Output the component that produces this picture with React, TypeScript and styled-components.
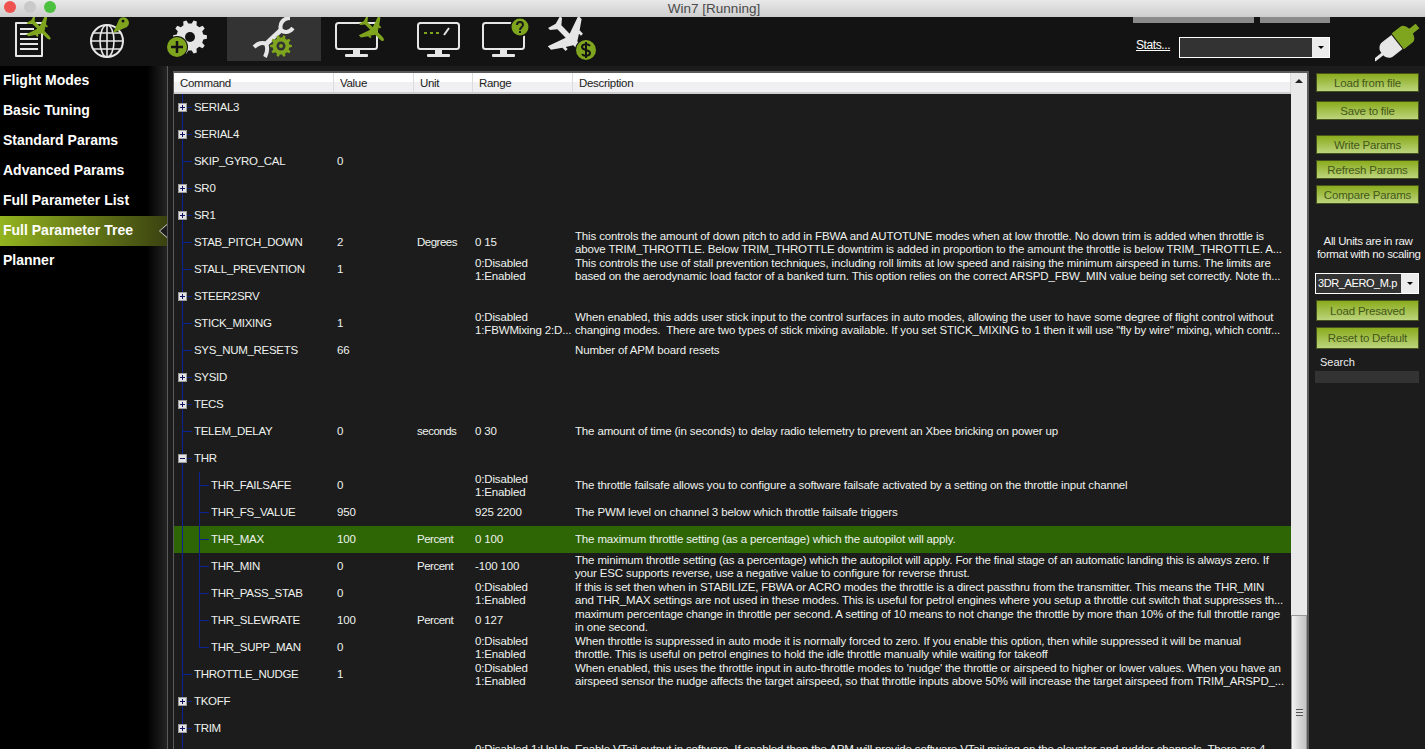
import styled, { createGlobalStyle } from 'styled-components';

const GlobalStyle = createGlobalStyle`
    html, body {
        margin: 0;
        padding: 0;
        background: #1c1c1c;
        overflow: hidden;
    }
`;

const Screen = styled.div`
    display: flex;
    flex-direction: column;
    width: 1425px;
    height: 749px;
    overflow: hidden;
    font-family: "Liberation Sans", Arial, sans-serif;
`;

const TitleBar = styled.div`
    position: relative;
    display: flex;
    align-items: center;
    justify-content: center;
    flex: 0 0 17px;
    padding-left: 3px;
    background: linear-gradient(#e9e9e9, #cdcdcd);
    color: #4a4a4a;
    font-size: 13.5px;
    z-index: 3;
`;

const Lights = styled.div`
    position: absolute;
    left: 4px;
    top: 1px;
    display: flex;
    gap: 8px;
`;

const Light = styled.span<{ $color: string }>`
    width: 12px;
    height: 12px;
    border-radius: 50%;
    background: ${(p) => p.$color};
`;

const Toolbar = styled.div`
    display: flex;
    align-items: flex-start;
    flex: 0 0 49px;
    background: #131313;
`;

const ToolButton = styled.div<{ $width: number; $active?: boolean }>`
    flex: 0 0 ${(p) => p.$width}px;
    height: ${(p) => (p.$active ? 44 : 49)}px;
    background: ${(p) => (p.$active ? '#333333' : 'transparent')};
    overflow: hidden;

    svg {
        display: block;
    }
`;

const ToolRight = styled.div`
    position: relative;
    display: flex;
    align-items: center;
    flex: 1;
    height: 49px;
    padding: 12px 0 0 526px;
    box-sizing: border-box;
`;

const TopTabs = styled.div`
    position: absolute;
    top: 0;
    left: 523px;
    display: flex;
    gap: 6px;
`;

const TopTab = styled.div<{ $width: number }>`
    width: ${(p) => p.$width}px;
    height: 6px;
    background: #8a8a8a;
`;

const StatsLink = styled.a`
    color: #fff;
    font-size: 12px;
    letter-spacing: -0.4px;
    text-decoration: underline;
    margin: -6px 9px 0 0;
    width: 34px;
`;

const Combo = styled.div<{ $width: number; $height: number; $top?: number }>`
    display: flex;
    align-items: stretch;
    box-sizing: border-box;
    flex-shrink: 0;
    width: ${(p) => p.$width}px;
    height: ${(p) => p.$height}px;
    margin-top: ${(p) => p.$top ?? 0}px;
    border: 1px solid #fff;
    background: #333;
    color: #fff;
    font-size: 11px;
    letter-spacing: -0.4px;
`;

const ComboText = styled.div`
    flex: 1;
    padding-left: 2px;
    line-height: 19px;
    white-space: nowrap;
    overflow: hidden;
`;

const ComboArrow = styled.div`
    display: flex;
    align-items: center;
    justify-content: center;
    flex: 0 0 17px;
    background: #ececec;

    &::after {
        content: '';
        border-left: 3px solid transparent;
        border-right: 3px solid transparent;
        border-top: 3px solid #000;
    }
`;

const PlugBox = styled.div`
    margin: -12px 0 0 45px;
    svg {
        display: block;
    }
`;

const Main = styled.div`
    display: flex;
    flex: 1;
    min-height: 0;
`;

const Sidebar = styled.nav`
    flex: 0 0 167px;
    background: linear-gradient(90deg, #000 88%, #242424 100%);
    border-right: 1px solid #5a5a5a;
`;

const SideItem = styled.div<{ $active?: boolean }>`
    position: relative;
    height: 30px;
    line-height: 28px;
    padding-left: 3px;
    color: #fff;
    font-size: 14px;
    font-weight: bold;
    background: ${(p) => (p.$active ? 'linear-gradient(90deg, #94b41f, #3a4210)' : 'transparent')};

    ${(p) =>
        p.$active &&
        `
        &::before, &::after {
            content: '';
            position: absolute;
            top: 50%;
            right: 0;
            clip-path: polygon(0 50%, 100% 0, 100% 100%);
        }
        &::before {
            width: 8px;
            height: 14px;
            margin-top: -7px;
            background: #d8d8d8;
        }
        &::after {
            width: 7px;
            height: 12px;
            margin-top: -6px;
            background: #1c1c1c;
        }
    `}
`;

const Content = styled.div`
    display: flex;
    flex: 0 0 1136px;
    box-sizing: border-box;
    margin: 5px 0 0 5px;
    border: 1px solid #5a5a5a;
    border-width: 2px 2px 0 1px;
    background: #1c1c1c;
    overflow: hidden;
`;

const GridColumn = styled.div`
    display: flex;
    flex-direction: column;
    flex: 0 0 1117px;
    min-width: 0;
`;

const columns = '160px 80px 59px 100px 1fr';

const HeaderRow = styled.div`
    display: grid;
    grid-template-columns: ${columns};
    flex: 0 0 21px;
    box-sizing: border-box;
    background: linear-gradient(#fff 0 45%, #f0f0f2 45% 100%);
    border-bottom: 2px solid #cfcfcf;
    color: #222;
    font-size: 11.5px;
    letter-spacing: -0.3px;
`;

const HeaderCell = styled.div`
    padding: 1px 0 0 6px;
    line-height: 18px;
    border-right: 1px solid #dcdcdc;
`;

const RowList = styled.div`
    position: relative;
    flex: 1;
    overflow: hidden;

    &::before {
        content: '';
        position: absolute;
        top: 0;
        bottom: 0;
        left: 8px;
        width: 1px;
        background: #0c2290;
        z-index: 1;
    }
`;

const Row = styled.div<{ $selected?: boolean }>`
    display: grid;
    grid-template-columns: ${columns};
    align-items: center;
    height: 27px;
    color: #eef2ee;
    font-size: 11.5px;
    line-height: 13px;
    letter-spacing: -0.15px;
    background: ${(p) => (p.$selected ? '#2f6605' : 'transparent')};
`;

const NameCell = styled.div<{ $child?: boolean; $leaf?: boolean; $last?: boolean }>`
    position: relative;
    height: 27px;
    line-height: 27px;
    padding-left: ${(p) => (p.$child ? 37 : 20)}px;
    white-space: nowrap;
    letter-spacing: -0.3px;

    ${(p) =>
        p.$child &&
        `
        &::before {
            content: '';
            position: absolute;
            left: 25px;
            top: 0;
            bottom: ${p.$last ? 13 : 0}px;
            width: 1px;
            background: #0c2290;
        }
    `}

    ${(p) =>
        p.$leaf &&
        `
        &::after {
            content: '';
            position: absolute;
            left: ${p.$child ? 25 : 8}px;
            top: 13px;
            width: 10px;
            height: 1px;
            background: #0c2290;
        }
    `}
`;

const Expander = styled.span<{ $open?: boolean }>`
    position: absolute;
    left: 4px;
    top: 9px;
    box-sizing: border-box;
    width: 9px;
    height: 9px;
    background: #e4e4e4;
    border: 1px solid #9a9a9a;
    z-index: 2;

    &::before {
        content: '';
        position: absolute;
        left: 1px;
        top: 3px;
        width: 5px;
        height: 1px;
        background: #101060;
    }

    ${(p) =>
        !p.$open &&
        `
        &::after {
            content: '';
            position: absolute;
            left: 3px;
            top: 1px;
            width: 1px;
            height: 5px;
            background: #101060;
        }
    `}
`;

const Tick = styled.span`
    position: absolute;
    left: 13px;
    top: 13px;
    width: 5px;
    height: 1px;
    background: #0c2290;
`;

const TextCell = styled.div<{ $pad: number; $tight?: boolean }>`
    padding-left: ${(p) => p.$pad}px;
    letter-spacing: ${(p) => (p.$tight ? '-0.5px' : 'inherit')};
    white-space: pre;
    overflow: hidden;
`;

const Description = styled.div`
    padding-left: 2px;
    white-space: pre;
    overflow: hidden;
`;

const ScrollTrack = styled.div`
    display: flex;
    flex-direction: column;
    justify-content: space-between;
    flex: 0 0 16px;
    background: #e9e9e9;
`;

const ScrollUp = styled.div`
    display: flex;
    justify-content: center;
    padding-top: 6px;

    &::after {
        content: '';
        border-left: 4px solid transparent;
        border-right: 4px solid transparent;
        border-bottom: 4px solid #222;
    }
`;

const ScrollThumb = styled.div`
    display: flex;
    align-items: center;
    justify-content: center;
    box-sizing: border-box;
    height: 134px;
    padding-top: 60px;
    border: 1px solid #999;
    border-bottom: 0;
    background: linear-gradient(90deg, #f4f4f4, #d8d8d8 50%, #c4c4c4);
`;

const Grip = styled.div`
    width: 7px;
    height: 7px;
    background: repeating-linear-gradient(#555 0 1px, #ddd 1px 3px);
`;

const ActionPanel = styled.div`
    display: flex;
    flex-direction: column;
    flex: 1;
    min-width: 0;
    padding: 7px 6px 0 6px;
    background: #1c1c1c;
`;

const ActionButton = styled.button<{ $height?: number; $top: number }>`
    box-sizing: border-box;
    flex: 0 0 ${(p) => p.$height ?? 19}px;
    width: 103px;
    height: ${(p) => p.$height ?? 19}px;
    margin: ${(p) => p.$top}px 0 0 1px;
    padding: 0;
    border: 1px solid #46531c;
    background: linear-gradient(#8aab1c, #bcd47c);
    color: #43581a;
    font-family: inherit;
    font-size: 11.5px;
    letter-spacing: -0.2px;
`;

const UnitsNote = styled.div`
    margin: 31px 0 0 2px;
    color: #f0f0f0;
    font-size: 11.5px;
    letter-spacing: -0.35px;
    line-height: 13px;
    text-align: center;
    white-space: nowrap;
`;

const SearchLabel = styled.div`
    margin: 6px 0 0 5px;
    color: #eee;
    font-size: 11px;
    line-height: 14px;
`;

const SearchBox = styled.div`
    height: 12px;
    margin-top: 2px;
    background: #333;
`;

const GREEN = '#7fa51e';
const WHITE = '#e6e6e6';

const PLANE =
    'M0-50C4-50 6-44 6-36L6-16 20-7 20-13 26-13 26-3 46 11 46 21 6 7 6 32 18 42 18 48 0 43-18 48-18 42-6 32-6 7-46 21-46 11-26-3-26-13-20-13-20-7-6-16-6-36C-6-44-4-50 0-50Z';

const Plane = ({ x, y, scale, color }: { x: number; y: number; scale: number; color: string }) => (
    <path d={PLANE} fill={color} transform={`translate(${x} ${y}) rotate(135) scale(${scale})`} />
);

// gear outline as one path, teeth are plain trapezoids
const gearPath = (cx: number, cy: number, outer: number, inner: number, teeth: number) => {
    const points: string[] = [];
    const step = (Math.PI * 2) / teeth;
    for (let i = 0; i < teeth; i++) {
        const a = i * step;
        [
            [a - step * 0.3, inner],
            [a - step * 0.16, outer],
            [a + step * 0.16, outer],
            [a + step * 0.3, inner],
        ].forEach(([angle, r]) => {
            points.push(`${(cx + Math.cos(angle) * r).toFixed(1)} ${(cy + Math.sin(angle) * r).toFixed(1)}`);
        });
    }
    return `M${points.join('L')}Z`;
};

const ToolIcon = ({ x, width, children }: { x: number; width: number; children: React.ReactNode }) => (
    <svg width={width} height={49} viewBox={`${x} 17 ${width} 49`}>
        {children}
    </svg>
);

const Monitor = ({ x }: { x: number }) => (
    <g>
        <rect x={x + 1} y={23} width={41} height={26} rx={2.5} fill="none" stroke={WHITE} strokeWidth={2} />
        <rect x={x + 18} y={49} width={7} height={5} fill={WHITE} />
        <rect x={x + 10} y={54} width={23} height={3} rx={1} fill={WHITE} />
    </g>
);

const FlightDataIcon = () => (
    <ToolIcon x={0} width={70}>
        <path d="M16 23H42V56H16Z" fill="none" stroke={WHITE} strokeWidth={2} strokeLinejoin="round" />
        <path d="M20 29H34M20 34H38M20 39H38M20 44H38M20 49H38" stroke={WHITE} strokeWidth={2} />
        <Plane x={40} y={29} scale={0.29} color={GREEN} />
    </ToolIcon>
);

const FlightPlanIcon = () => (
    <ToolIcon x={70} width={75}>
        <circle cx={107} cy={41} r={16} fill="none" stroke={WHITE} strokeWidth={2} />
        <ellipse cx={107} cy={41} rx={7} ry={16} fill="none" stroke={WHITE} strokeWidth={1.6} />
        <path d="M107 25V57M91 41H123M93.500 33H120.500M93.500 49H120.500" stroke={WHITE} strokeWidth={1.6} />
        <path d="M113 33L118 22A5.500 5.500 0 1 1 127 27Z" fill={GREEN} />
        <circle cx={123} cy={21} r={1.5} fill="#131313" />
    </ToolIcon>
);

const SetupIcon = () => (
    <ToolIcon x={145} width={82}>
        <path d={gearPath(190, 37, 17, 13.500, 10)} fill={WHITE} />
        <circle cx={190} cy={37} r={5} fill="#131313" />
        <circle cx={177} cy={47} r={11} fill="#131313" />
        <circle cx={177} cy={47} r={10} fill={GREEN} />
        <path d="M177 41V53M171 47H183" stroke="#131313" strokeWidth={2.500} />
    </ToolIcon>
);

const ConfigIcon = () => (
    <ToolIcon x={227} width={94}>
        <g fill="none" stroke={WHITE}>
            <path d="M290 18C283 18 279 24 281 30 284 33 289 33 293 28" strokeWidth={4} />
            <path d="M281 30L265 45" strokeWidth={5} />
            <path d="M254 47C258 43 263 42 266 44 268 48 267 53 265 57" strokeWidth={4} />
        </g>
        <path d={gearPath(281, 46, 11, 8.500, 10)} fill={GREEN} />
        <circle cx={281} cy={46} r={4.500} fill="#333" />
        <circle cx={281} cy={46} r={2} fill={GREEN} />
    </ToolIcon>
);

const SimulationIcon = () => (
    <ToolIcon x={321} width={79}>
        <Monitor x={335} />
        <Plane x={373} y={30} scale={0.3} color={GREEN} />
    </ToolIcon>
);

const TerminalIcon = () => (
    <ToolIcon x={400} width={70}>
        <Monitor x={417} />
        <path d="M424 33H427M430 33H433M436 33H439" stroke={GREEN} strokeWidth={2} />
        <path d="M444 35L449 28" stroke={WHITE} strokeWidth={2} />
    </ToolIcon>
);

const HelpIcon = () => (
    <ToolIcon x={470} width={65}>
        <Monitor x={482} />
        <circle cx={520} cy={27} r={10} fill="#131313" />
        <circle cx={520} cy={27} r={8.500} fill={GREEN} />
        <path d="M517 25C517 21 523 21 523 25 523 27 520 27 520 30" fill="none" stroke="#1a1a1a" strokeWidth={2} />
        <rect x={519} y={31} width={2} height={2} fill="#1a1a1a" />
    </ToolIcon>
);

const DonateIcon = () => (
    <ToolIcon x={535} width={75}>
        <Plane x={570} y={38} scale={0.47} color={WHITE} />
        <circle cx={586} cy={50} r={11} fill="#131313" />
        <circle cx={586} cy={50} r={10} fill={GREEN} />
        <path d="M590 46C588 43 582 44 582 47 582 51 590 49 590 53 590 56 584 57 582 54M586 42V58" fill="none" stroke="#131313" strokeWidth={2} />
    </ToolIcon>
);

const PlugIcon = () => (
    <svg width={50} height={40} viewBox="1375 20 50 40">
        <g transform="rotate(-38 1397 40)">
            <path d="M1385 31H1397V49H1385C1381 49 1378 45 1378 42L1378 38C1378 35 1381 31 1385 31Z" fill={WHITE} />
            <rect x={1368} y={39} width={11} height={3} fill={WHITE} />
            <path d="M1398 30H1409C1413 30 1415 35 1415 40 1415 45 1413 50 1409 50H1398Z" fill={GREEN} />
            <rect x={1414} y={37} width={9} height={6} fill={GREEN} />
        </g>
    </svg>
);

const sideItems = [
    'Flight Modes',
    'Basic Tuning',
    'Standard Params',
    'Advanced Params',
    'Full Parameter List',
    'Full Parameter Tree',
    'Planner',
];

const ENABLE = '0:Disabled\n1:Enabled';

type Param = {
    name: string;
    kind?: 'closed' | 'open';
    child?: boolean;
    last?: boolean;
    selected?: boolean;
    value?: string;
    unit?: string;
    range?: string;
    desc?: string;
};

const params: Param[] = [
    { name: 'SERIAL3', kind: 'closed' },
    { name: 'SERIAL4', kind: 'closed' },
    { name: 'SKIP_GYRO_CAL', value: '0' },
    { name: 'SR0', kind: 'closed' },
    { name: 'SR1', kind: 'closed' },
    {
        name: 'STAB_PITCH_DOWN',
        value: '2',
        unit: 'Degrees',
        range: '0 15',
        desc: 'This controls the amount of down pitch to add in FBWA and AUTOTUNE modes when at low throttle. No down trim is added when throttle is\nabove TRIM_THROTTLE. Below TRIM_THROTTLE downtrim is added in proportion to the amount the throttle is below TRIM_THROTTLE. A...',
    },
    {
        name: 'STALL_PREVENTION',
        value: '1',
        range: ENABLE,
        desc: 'This controls the use of stall prevention techniques, including roll limits at low speed and raising the minimum airspeed in turns. The limits are\nbased on the aerodynamic load factor of a banked turn. This option relies on the correct ARSPD_FBW_MIN value being set correctly. Note th...',
    },
    { name: 'STEER2SRV', kind: 'closed' },
    {
        name: 'STICK_MIXING',
        value: '1',
        range: '0:Disabled\n1:FBWMixing 2:D...',
        desc: 'When enabled, this adds user stick input to the control surfaces in auto modes, allowing the user to have some degree of flight control without\nchanging modes.  There are two types of stick mixing available. If you set STICK_MIXING to 1 then it will use "fly by wire" mixing, which contr...',
    },
    { name: 'SYS_NUM_RESETS', value: '66', desc: 'Number of APM board resets' },
    { name: 'SYSID', kind: 'closed' },
    { name: 'TECS', kind: 'closed' },
    {
        name: 'TELEM_DELAY',
        value: '0',
        unit: 'seconds',
        range: '0 30',
        desc: 'The amount of time (in seconds) to delay radio telemetry to prevent an Xbee bricking on power up',
    },
    { name: 'THR', kind: 'open' },
    {
        name: 'THR_FAILSAFE',
        child: true,
        value: '0',
        range: ENABLE,
        desc: 'The throttle failsafe allows you to configure a software failsafe activated by a setting on the throttle input channel',
    },
    {
        name: 'THR_FS_VALUE',
        child: true,
        value: '950',
        range: '925 2200',
        desc: 'The PWM level on channel 3 below which throttle failsafe triggers',
    },
    {
        name: 'THR_MAX',
        child: true,
        selected: true,
        value: '100',
        unit: 'Percent',
        range: '0 100',
        desc: 'The maximum throttle setting (as a percentage) which the autopilot will apply.',
    },
    {
        name: 'THR_MIN',
        child: true,
        value: '0',
        unit: 'Percent',
        range: '-100 100',
        desc: 'The minimum throttle setting (as a percentage) which the autopilot will apply. For the final stage of an automatic landing this is always zero. If\nyour ESC supports reverse, use a negative value to configure for reverse thrust.',
    },
    {
        name: 'THR_PASS_STAB',
        child: true,
        value: '0',
        range: ENABLE,
        desc: 'If this is set then when in STABILIZE, FBWA or ACRO modes the throttle is a direct passthru from the transmitter. This means the THR_MIN\nand THR_MAX settings are not used in these modes. This is useful for petrol engines where you setup a throttle cut switch that suppresses th...',
    },
    {
        name: 'THR_SLEWRATE',
        child: true,
        value: '100',
        unit: 'Percent',
        range: '0 127',
        desc: 'maximum percentage change in throttle per second. A setting of 10 means to not change the throttle by more than 10% of the full throttle range\nin one second.',
    },
    {
        name: 'THR_SUPP_MAN',
        child: true,
        last: true,
        value: '0',
        range: ENABLE,
        desc: 'When throttle is suppressed in auto mode it is normally forced to zero. If you enable this option, then while suppressed it will be manual\nthrottle. This is useful on petrol engines to hold the idle throttle manually while waiting for takeoff',
    },
    {
        name: 'THROTTLE_NUDGE',
        value: '1',
        range: ENABLE,
        desc: "When enabled, this uses the throttle input in auto-throttle modes to 'nudge' the throttle or airspeed to higher or lower values. When you have an\nairspeed sensor the nudge affects the target airspeed, so that throttle inputs above 50% will increase the target airspeed from TRIM_ARSPD_...",
    },
    { name: 'TKOFF', kind: 'closed' },
    { name: 'TRIM', kind: 'closed' },
    {
        name: '',
        range: '0:Disabled 1:UpUp\n ',
        desc: 'Enable VTail output in software. If enabled then the APM will provide software VTail mixing on the elevator and rudder channels. There are 4\n ',
    },
];

const ParamRow = ({ param }: { param: Param }) => (
    <Row $selected={param.selected}>
        <NameCell $child={param.child} $leaf={!param.kind && !!param.name} $last={param.last}>
            {param.kind && <Expander $open={param.kind === 'open'} />}
            {param.kind && <Tick />}
            {param.name}
        </NameCell>
        <TextCell $pad={3}>{param.value}</TextCell>
        <TextCell $pad={3} $tight>{param.unit}</TextCell>
        <TextCell $pad={2}>{param.range}</TextCell>
        <Description>{param.desc}</Description>
    </Row>
);

export default function App() {
    return (
        <Screen>
            <GlobalStyle />
            <TitleBar>
                <Lights>
                    <Light $color="#ef5350" />
                    <Light $color="#c9c9c9" />
                    <Light $color="#4cc13f" />
                </Lights>
                Win7 [Running]
            </TitleBar>
            <Toolbar>
                <ToolButton $width={70}><FlightDataIcon /></ToolButton>
                <ToolButton $width={75}><FlightPlanIcon /></ToolButton>
                <ToolButton $width={82}><SetupIcon /></ToolButton>
                <ToolButton $width={94} $active><ConfigIcon /></ToolButton>
                <ToolButton $width={79}><SimulationIcon /></ToolButton>
                <ToolButton $width={70}><TerminalIcon /></ToolButton>
                <ToolButton $width={65}><HelpIcon /></ToolButton>
                <ToolButton $width={75}><DonateIcon /></ToolButton>
                <ToolRight>
                    <TopTabs>
                        <TopTab $width={121} />
                        <TopTab $width={70} />
                    </TopTabs>
                    <StatsLink href="#stats">Stats...</StatsLink>
                    <Combo $width={151} $height={21}>
                        <ComboText />
                        <ComboArrow />
                    </Combo>
                    <PlugBox><PlugIcon /></PlugBox>
                </ToolRight>
            </Toolbar>
            <Main>
                <Sidebar>
                    {sideItems.map((item) => (
                        <SideItem key={item} $active={item === 'Full Parameter Tree'}>{item}</SideItem>
                    ))}
                </Sidebar>
                <Content>
                    <GridColumn>
                        <HeaderRow>
                            <HeaderCell>Command</HeaderCell>
                            <HeaderCell>Value</HeaderCell>
                            <HeaderCell>Unit</HeaderCell>
                            <HeaderCell>Range</HeaderCell>
                            <HeaderCell>Description</HeaderCell>
                        </HeaderRow>
                        <RowList>
                            {params.map((param, i) => (
                                <ParamRow key={i} param={param} />
                            ))}
                        </RowList>
                    </GridColumn>
                    <ScrollTrack>
                        <ScrollUp />
                        <ScrollThumb><Grip /></ScrollThumb>
                    </ScrollTrack>
                </Content>
                <ActionPanel>
                    <ActionButton $top={0}>Load from file</ActionButton>
                    <ActionButton $top={9}>Save to file</ActionButton>
                    <ActionButton $top={15}>Write Params</ActionButton>
                    <ActionButton $top={6}>Refresh Params</ActionButton>
                    <ActionButton $top={6}>Compare Params</ActionButton>
                    <UnitsNote>All Units are in raw<br />format with no scaling</UnitsNote>
                    <Combo $width={104} $height={21} $top={12}>
                        <ComboText>3DR_AERO_M.p</ComboText>
                        <ComboArrow />
                    </Combo>
                    <ActionButton $top={6} $height={21}>Load Presaved</ActionButton>
                    <ActionButton $top={6} $height={22}>Reset to Default</ActionButton>
                    <SearchLabel>Search</SearchLabel>
                    <SearchBox />
                </ActionPanel>
            </Main>
        </Screen>
    );
}
